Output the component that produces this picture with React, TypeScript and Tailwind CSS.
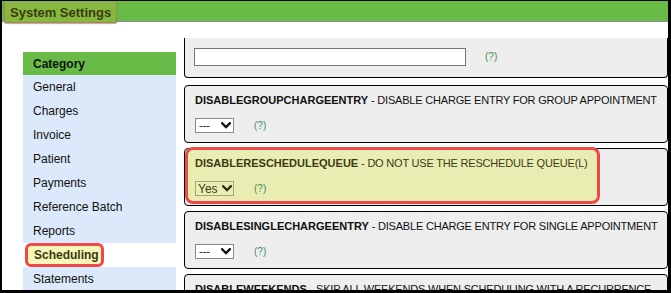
import React from "react";

const Chevron = ({ color = "#111" }: { color?: string }) => (
  <svg width="10" height="7" viewBox="0 0 10 7" className="shrink-0">
    <polyline points="1.2,1.2 5,5 8.8,1.2" fill="none" stroke={color} strokeWidth="2.3" strokeLinecap="square" />
  </svg>
);

const Help = () => <span className="text-[10px] text-[#3d8f5f] leading-none">(?)</span>;

const Select = ({ value = "---", hl = false }: { value?: string; hl?: boolean }) => (
  <div
    className={
      hl
        ? "w-[39px] h-[15px] border border-[#a5a57a] bg-[#eaeeb2] flex items-center justify-between pl-[2px] pr-[1px] text-[12px] text-[#3a3a14]"
        : "w-[39px] h-[15px] border border-[#8a8a8a] bg-white flex items-center justify-between pl-[3px] pr-[2px] text-[11px] text-[#111]"
    }
  >
    <span className="leading-none">{value}</span>
    <Chevron color={hl ? "#2e2e10" : "#111"} />
  </div>
);

const Card = ({ name, desc, value, hl = false }: { name: string; desc: string; value?: string; hl?: boolean }) => (
  <div className="relative h-[58px] border border-black rounded-[4px] bg-[#eeeeee] shrink-0">
    {hl && (
      <div className="absolute top-[-2px] left-0 w-[415px] h-[57px] border-[3px] border-[#f04848] rounded-[8px] bg-[#eaedb2]" />
    )}
    <div className={"relative pl-[10px] pt-[8px] " + (hl ? "text-[#3b3b14]" : "text-[#111]")}>
      <div className="text-[11px] leading-[13px] whitespace-nowrap">
        <span className="font-bold">{name}</span>
        <span className="tracking-[-0.2px]"> - {desc}</span>
      </div>
      <div className="mt-[11px] flex items-center gap-[20px]">
        <Select value={value} hl={hl} />
        <Help />
      </div>
    </div>
  </div>
);

const items = ["General", "Charges", "Invoice", "Patient", "Payments", "Reference Batch", "Reports"];

export default function App() {
  return (
    <div className="w-[671px] h-[293px] overflow-hidden bg-white border-black border-t border-l-2 border-r-[3px] border-b-[3px] font-['Liberation_Sans',Arial,sans-serif]">
      <header className="h-[20px] bg-[#67bb46] shadow-[0_1px_0_#8e8e8e] flex items-start">
        <div className="ml-[2px] mt-[1px] h-[21px] px-[5px] flex items-center bg-[#86b83f] border border-[#ab8258] border-t-[#9fa95a] rounded-[2px] shadow-[0_1px_1px_rgba(120,80,60,0.5)] text-[13px] font-bold text-[#3b3b12]">
          System Settings
        </div>
      </header>
      <div className="flex">
        <aside className="ml-[21px] mt-[31px] w-[153px] shrink-0 text-[12px] text-[#111]">
          <div className="h-[23px] bg-[#67bb46] flex items-center pl-[10px] font-bold">Category</div>
          {items.map((it) => (
            <div key={it} className="h-[24px] bg-[#dbe9fb] flex items-center pl-[10px]">
              {it}
            </div>
          ))}
          <div className="h-[24px] bg-white flex items-center pl-[2px]">
            <div className="h-[24px] w-[79px] border-[3px] border-[#f04848] rounded-[6px] bg-[#f6f6b8] flex items-center pl-[6px] font-bold text-[#3a3a10]">
              Scheduling
            </div>
          </div>
          <div className="h-[24px] bg-[#dbe9fb] flex items-center pl-[10px]">Statements</div>
        </aside>
        <main className="ml-[8px] mt-[17px] flex-1 flex flex-col gap-[5px]">
          <div className="h-[40px] border-l border-r border-b border-black rounded-b-[4px] bg-[#eeeeee] mb-[2px] flex items-center pl-[9px] pb-[1px] gap-[19px]">
            <div className="w-[272px] h-[18px] border border-[#767676] bg-white" />
            <Help />
          </div>
          <Card name="DISABLEGROUPCHARGEENTRY" desc="DISABLE CHARGE ENTRY FOR GROUP APPOINTMENT" />
          <Card name="DISABLERESCHEDULEQUEUE" desc="DO NOT USE THE RESCHEDULE QUEUE(L)" value="Yes" hl />
          <Card name="DISABLESINGLECHARGEENTRY" desc="DISABLE CHARGE ENTRY FOR SINGLE APPOINTMENT" />
          <Card name="DISABLEWEEKENDS" desc="SKIP ALL WEEKENDS WHEN SCHEDULING WITH A RECURRENCE" />
        </main>
      </div>
    </div>
  );
}
